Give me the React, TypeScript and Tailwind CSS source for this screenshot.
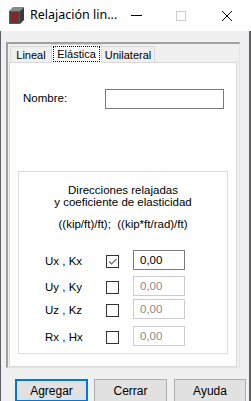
import React from 'react'

const Row = ({ label, on, mt }: { label: string; on: boolean; mt: string }) => (
  <div className={`flex items-center h-[20px] pl-[26px] ${mt}`}>
    <span className="w-[61px] pt-[3px] text-[11.5px]">{label}</span>
    <span className="w-[13px] h-[13px] border border-[#333] bg-white flex items-center justify-center mt-[2px]">
      {on && (
        <svg width="11" height="11" viewBox="0 0 11 11">
          <path d="M2 5.5 L4.5 8 L9.5 3" fill="none" stroke="#6d6d6d" strokeWidth="1.2" />
        </svg>
      )}
    </span>
    <span
      className={`ml-[14px] w-[52px] h-[20px] border bg-white pl-[6px] leading-[18px] text-[11.5px] ${
        on ? 'border-[#7a7a7a] text-black' : 'border-[#cccccc] text-[#8a8a8a]'
      }`}
    >
      0,00
    </span>
  </div>
)

const App = () => {
  return (
    <div className="w-[251px] h-[401px] bg-white overflow-hidden text-[11px] text-black font-['Liberation_Sans',Arial,sans-serif]">
      {/* title bar */}
      <div className="h-[31px] flex items-center bg-white relative">
        <svg className="ml-[9px]" width="15" height="17" viewBox="0 0 15 17">
          <path d="M0 4 L4 0 L15 0 L11 4 Z" fill="#8a8a8a" />
          <path d="M11 4 L15 0 L15 13 L11 17 Z" fill="#3a3a3a" />
          <rect x="0" y="4" width="11" height="13" fill="#5a5a5a" />
          <rect x="1" y="5" width="9" height="11" fill="#444" />
          <rect x="3" y="8" width="5" height="5" fill="none" stroke="#e00000" strokeWidth="1.3" />
        </svg>
        <span className="ml-[6px] text-[12.5px] font-['Noto_Sans',sans-serif] text-black">Relajación lin...</span>
        <span className="absolute left-[131px] top-[15px] w-[11px] h-px bg-black" />
        <span className="absolute left-[176px] top-[11px] w-[10px] h-[10px] border border-[#cccccc]" />
        <svg className="absolute left-[221px] top-[10px]" width="12" height="12" viewBox="0 0 12 12">
          <path d="M1 1 L11 11 M11 1 L1 11" stroke="#000" strokeWidth="1" />
        </svg>
      </div>

      {/* body */}
      <div className="h-[370px] bg-[#f0f0f0] border-l border-r-2 border-[#5e6066] pl-[5px] pt-[11px]">
        <div className="w-[234px] h-[326px] border-t-2 border-l-2 border-[#a0a0a0] border-r border-b border-r-[#e3e3e3] border-b-[#e3e3e3] pl-px">
          {/* tabs */}
          <div className="flex items-end h-[18px] text-[11px]">
            <div className="ml-px w-[41px] h-[16px] border-t border-l border-[#d9d9d9] bg-[#f0f0f0] flex items-center justify-center pt-px">
              Lineal
            </div>
            <div className="relative z-10 w-[51px] h-[19px] -mb-px border-t border-l border-r border-[#d9d9d9] bg-white flex items-start justify-center pt-px">
              <span className="border border-dotted border-black px-[3px] h-[16px] leading-[14px]">Elástica</span>
            </div>
            <div className="w-[53px] h-[16px] border-t border-r border-[#d9d9d9] bg-[#f0f0f0] flex items-center justify-center pt-px">
              Unilateral
            </div>
          </div>
          {/* tab page */}
          <div className="w-[228px] h-[305px] border border-[#d9d9d9] bg-white pt-[26px]">
            <div className="flex items-center pl-[13px]">
              <span className="w-[82px] text-[11.5px]">Nombre:</span>
              <span className="w-[119px] h-[20px] border border-[#7a7a7a] bg-white" />
            </div>
            <div className="ml-[8px] mt-[62px] w-[210px] h-[183px] border border-[#dcdcdc] pt-[12px]">
              <div className="text-center leading-[12px] text-[11.5px]">
                <div>Direcciones relajadas</div>
                <div>y coeficiente de elasticidad</div>
                <div className="mt-[10px]">((kip/ft)/ft);&nbsp; ((kip*ft/rad)/ft)</div>
              </div>
              <Row label="Ux , Kx" on={true} mt="mt-[20px]" />
              <Row label="Uy , Ky" on={false} mt="mt-[6px]" />
              <Row label="Uz , Kz" on={false} mt="mt-[3px]" />
              <Row label="Rx , Hx" on={false} mt="mt-[7px]" />
            </div>
          </div>
        </div>
        {/* buttons */}
        <div className="flex mt-[11px] ml-[9px]">
          <button className="w-[73px] h-[23px] border-2 border-[#0078d7] bg-[#e1e1e1] text-[12px]">Agregar</button>
          <button className="ml-[6px] w-[73px] h-[23px] border border-[#adadad] bg-[#e1e1e1] text-[12px]">Cerrar</button>
          <button className="ml-[7px] w-[72px] h-[23px] border border-[#adadad] bg-[#e1e1e1] text-[12px]">Ayuda</button>
        </div>
      </div>
    </div>
  )
}

export default App
